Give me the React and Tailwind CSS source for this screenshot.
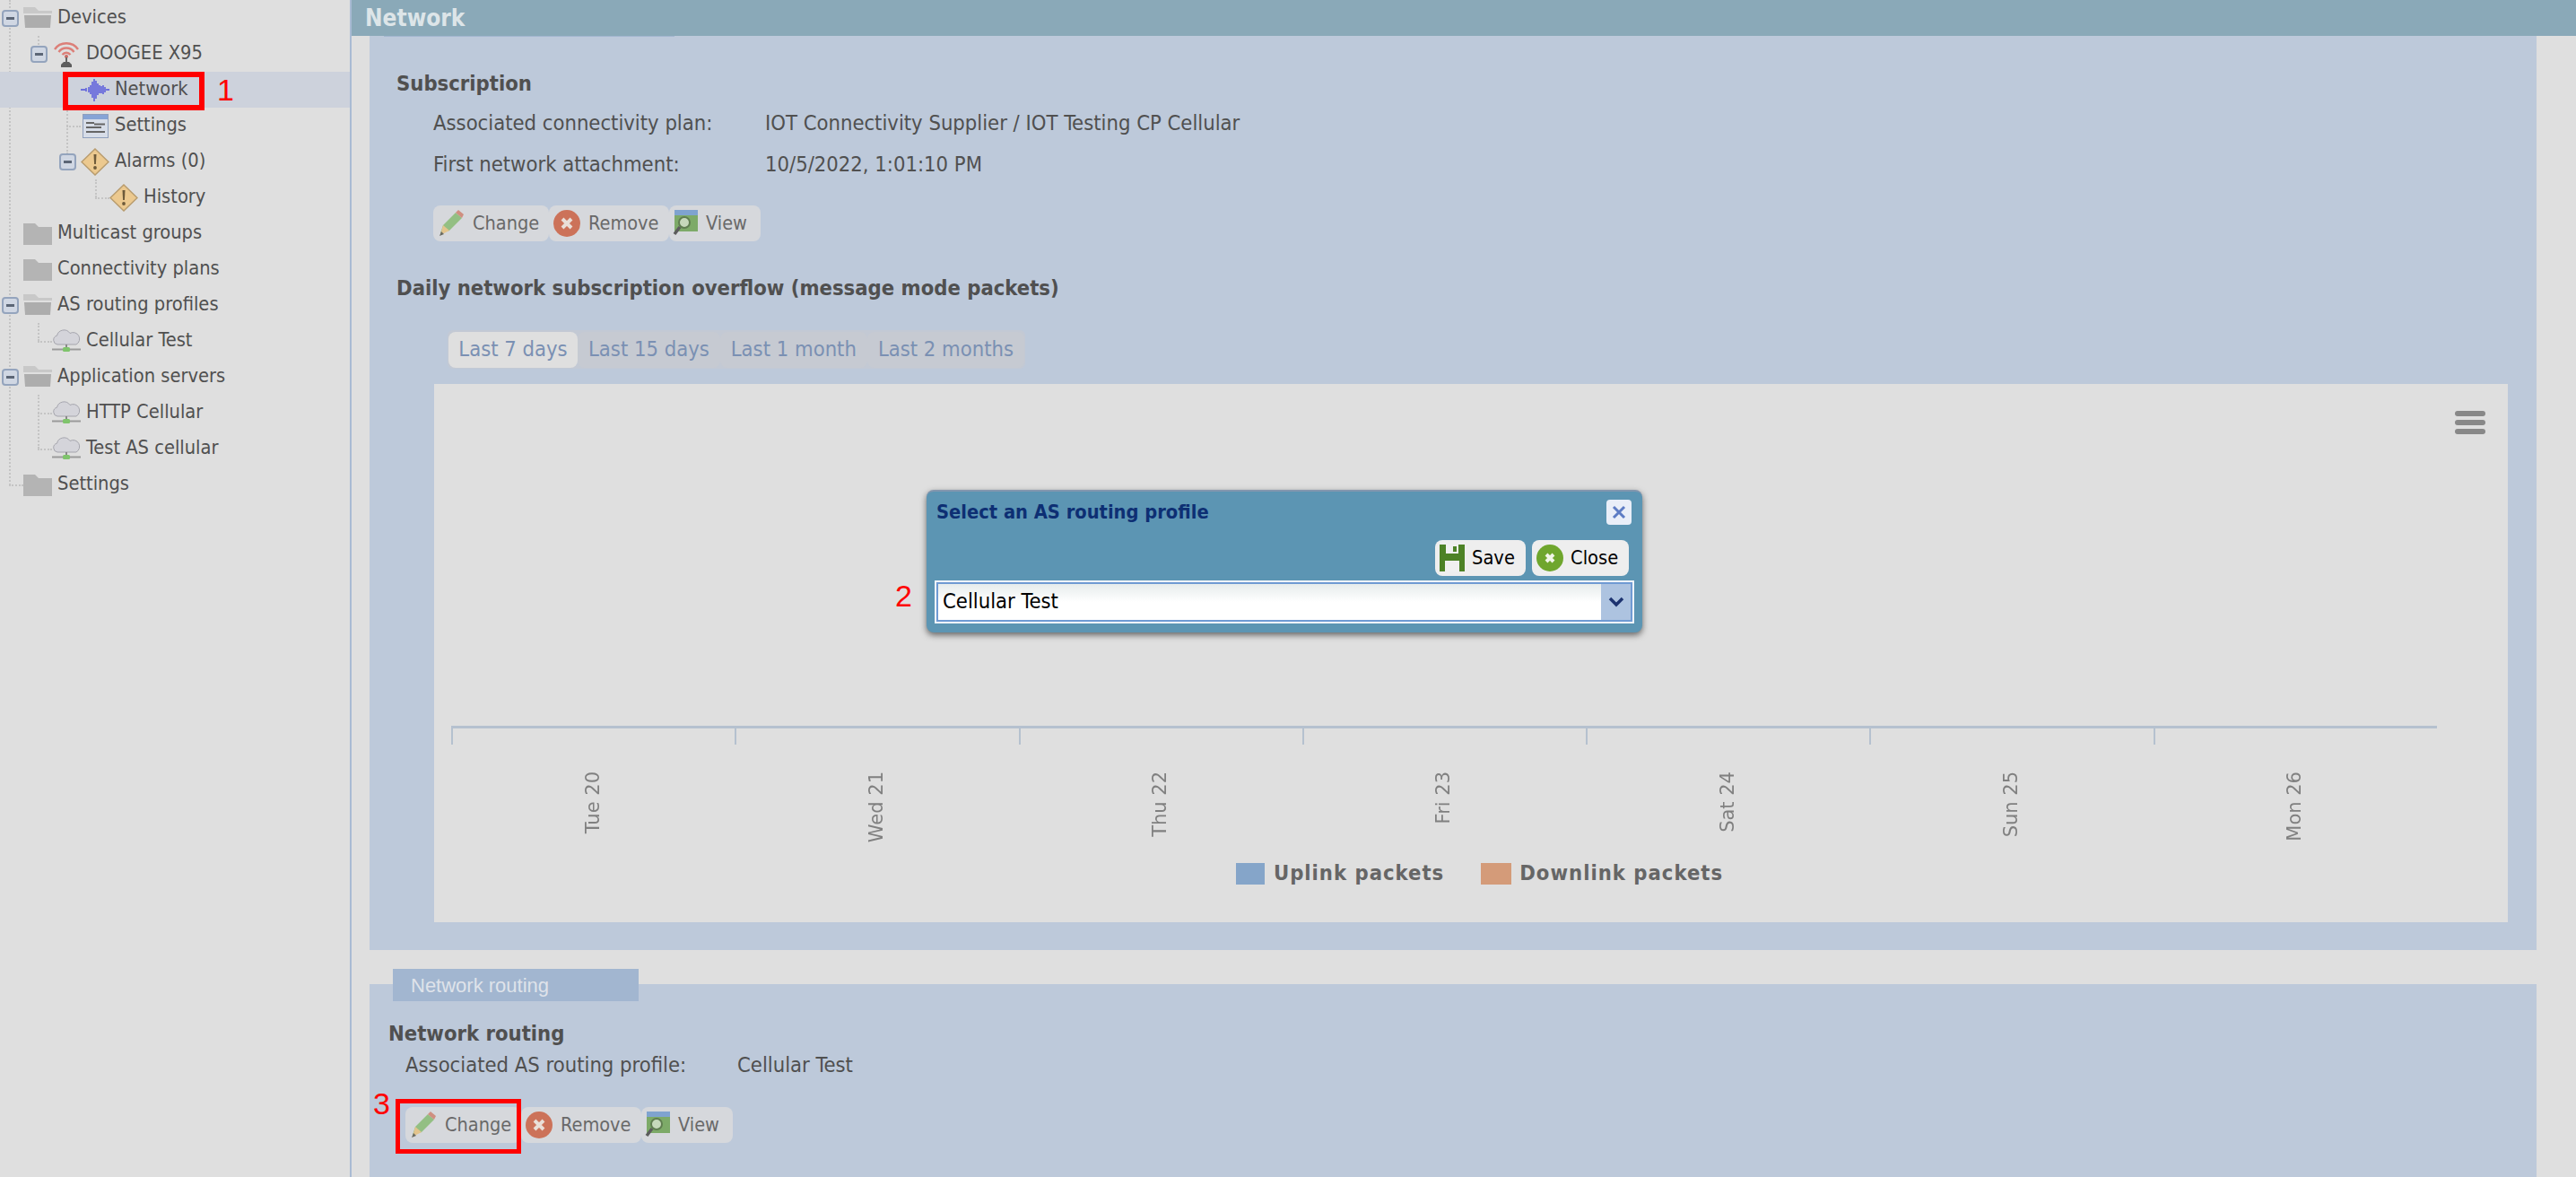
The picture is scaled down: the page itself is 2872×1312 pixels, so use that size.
import React from 'react';

const Minus = () => (
  <svg width="19" height="19" viewBox="0 0 19 19" className="shrink-0 blur-[0.4px]">
    <rect x="1" y="1" width="17" height="17" rx="3" fill="#d0d7e3" stroke="#94a4bd" strokeWidth="2" />
    <rect x="5" y="8" width="9" height="3" fill="#5c6676" />
  </svg>
);

const FolderClosed = () => (
  <svg width="32" height="26" viewBox="0 0 32 26" className="shrink-0">
    <path d="M0 2h13l4 4h15v20H0z" fill="#b4b4b4" />
  </svg>
);

const FolderOpen = () => (
  <svg width="32" height="26" viewBox="0 0 32 26" className="shrink-0">
    <path d="M0 1h13l4 4h15v3H0z" fill="#c8c8c8" />
    <path d="M1 10h30l-1 14H2z" fill="#adadad" />
  </svg>
);

const Wifi = () => (
  <svg width="30" height="32" viewBox="0 0 30 32" className="shrink-0 blur-[0.4px]">
    <g fill="none" stroke="#dc7f78" strokeWidth="2.4">
      <path d="M2 11C8 2 22 2 28 11" />
      <path d="M6.5 14C10.5 8 19.500 8 23.500 14" />
      <path d="M10.5 17C13 14 17 14 19.500 17" />
    </g>
    <circle cx="15" cy="19" r="2" fill="#c96a63" />
    <path d="M14 20h2v5h-2z" fill="#666" />
    <path d="M9 31v-3l3-3h6l3 3v3z" fill="#5e5e5e" />
  </svg>
);

const Wave = () => (
  <svg width="32" height="28" viewBox="0 0 32 28" className="shrink-0 blur-[0.4px]">
    <path
      d="M0 14h6M6 12v4M9 11v6M11 9v10M13 5v18M15 2v25M17 4v20M19 7v13M21 9v9M23 10v8M25 9v10M27 11v6M29 13v2M29 14h3"
      fill="none"
      stroke="#6d6fdc"
      strokeWidth="1.8"
    />
  </svg>
);

const SettingsForm = () => (
  <svg width="29" height="27" viewBox="0 0 29 27" className="shrink-0 blur-[0.4px]">
    <rect x="0.500" y="0.500" width="28" height="26" fill="#d7dde8" stroke="#8f9fbc" />
    <rect x="1" y="1" width="27" height="5" fill="#86a4d6" />
    <path d="M4 10h9M4 15h17M4 20h9M13 11.500h12M8 20h17" stroke="#666" strokeWidth="1.800" />
  </svg>
);

const Diamond = () => (
  <svg width="32" height="31" viewBox="0 0 32 31" className="shrink-0 blur-[0.4px]">
    <path d="M16 1l15 14.500L16 30 1 15.500z" fill="#ecc98f" stroke="#b89c6e" strokeWidth="1.500" />
    <path d="M14.500 7h3l-.6 11h-1.800z" fill="#6d5a3a" />
    <circle cx="16" cy="22" r="1.900" fill="#6d5a3a" />
  </svg>
);

const Cloud = () => (
  <svg width="32" height="26" viewBox="0 0 32 26" className="shrink-0 blur-[0.4px]">
    <path d="M6 17a5 5 0 0 1-.5-9.800A8 8 0 0 1 20 4.500 6.500 6.500 0 0 1 27 17z" fill="#d4d4da" stroke="#a5a5ad" />
    <path d="M15 17h2v4h-2z" fill="#888" />
    <path d="M0 22.500h32" stroke="#9a9a9a" strokeWidth="2" />
    <rect x="12" y="20" width="8" height="5" rx="1.500" fill="#7fc46c" />
  </svg>
);

const Pencil = () => (
  <svg width="32" height="32" viewBox="0 0 32 32" className="shrink-0 blur-[0.4px]">
    <path d="M4 27l3-9L21 4l7 6-14 14z" fill="#93bf83" />
    <path d="M21 4l3-3 6 5-2 4z" fill="#cf8f80" />
    <path d="M4 29l3-11 7 6z" fill="#e3c48d" />
    <path d="M3 30l2-5 3 3z" fill="#6b6b62" />
  </svg>
);

const RemoveIcon = () => (
  <svg width="32" height="32" viewBox="0 0 32 32" className="shrink-0 blur-[0.4px]">
    <circle cx="16" cy="16" r="15" fill="#cc7259" />
    <path d="M11 11l10 10M21 11L11 21" stroke="#e9dfd8" strokeWidth="4" />
  </svg>
);

const ViewIcon = () => (
  <svg width="29" height="32" viewBox="0 0 29 32" className="shrink-0 blur-[0.4px]">
    <rect x="2" y="1" width="26" height="24" fill="#7daa68" />
    <rect x="2" y="1" width="26" height="6" fill="#7fa3cf" />
    <circle cx="13" cy="15" r="6" fill="#c6d8bb" stroke="#5f7d50" strokeWidth="2" />
    <path d="M8 20l-6 8" stroke="#5c5c5c" strokeWidth="3.500" />
  </svg>
);

const Floppy = () => (
  <svg width="30" height="32" viewBox="0 0 30 32" className="shrink-0 blur-[0.4px]">
    <path d="M1 1h28v30H1z" fill="#4d8226" />
    <rect x="8" y="1" width="14" height="10" fill="#f0f0f0" />
    <rect x="16" y="3" width="4" height="6" fill="#4d8226" />
    <rect x="7" y="19" width="16" height="12" fill="#f0f0f0" />
  </svg>
);

const CloseIcon = () => (
  <svg width="32" height="32" viewBox="0 0 32 32" className="shrink-0 blur-[0.4px]">
    <circle cx="16" cy="16" r="15" fill="#6fa62d" />
    <path d="M12 12l8 8M20 12l-8 8" stroke="#f1f5e8" strokeWidth="4" />
  </svg>
);

const tree = [
  { label: 'Devices', left: 2, Icon: FolderOpen, minus: true },
  { label: 'DOOGEE X95', left: 34, Icon: Wifi, minus: true },
  { label: 'Network', left: 66, Icon: Wave, selected: true },
  { label: 'Settings', left: 66, Icon: SettingsForm },
  { label: 'Alarms (0)', left: 66, Icon: Diamond, minus: true },
  { label: 'History', left: 98, Icon: Diamond },
  { label: 'Multicast groups', left: 2, Icon: FolderClosed },
  { label: 'Connectivity plans', left: 2, Icon: FolderClosed },
  { label: 'AS routing profiles', left: 2, Icon: FolderOpen, minus: true },
  { label: 'Cellular Test', left: 34, Icon: Cloud },
  { label: 'Application servers', left: 2, Icon: FolderOpen, minus: true },
  { label: 'HTTP Cellular', left: 34, Icon: Cloud },
  { label: 'Test AS cellular', left: 34, Icon: Cloud },
  { label: 'Settings', left: 2, Icon: FolderClosed },
];

function TreeRow({ item }) {
  const { label, left, Icon, minus, selected } = item;
  return (
    <div className={`relative flex h-10 items-center ${selected ? 'bg-[#cdd2dc]' : ''}`} style={{ paddingLeft: left }}>
      <span className="flex w-[24px] justify-start">{minus && <Minus />}</span>
      <span className="flex w-[32px] justify-center"><Icon /></span>
      <span className="ml-[6px] whitespace-nowrap pb-[2px]">{label}</span>
      {selected && (
        <>
          <div className="absolute left-[70px] top-0 h-[43px] w-[158px] border-[6px] border-[#ff0000]" />
          <span className="absolute left-[242px] top-0 font-['Liberation_Sans',sans-serif] text-[34px] leading-[40px] text-[#ff0000]">1</span>
        </>
      )}
    </div>
  );
}

function ActionButtons() {
  return (
    <div className="flex h-10 w-fit text-[21.500px] text-[#696969]">
      <button className="flex w-[129px] items-center gap-2 rounded-lg bg-[#d6d8dc] pl-1"><Pencil />Change</button>
      <button className="flex w-[134px] items-center gap-2 rounded-lg bg-[#d6d8dc] pl-1"><RemoveIcon />Remove</button>
      <button className="flex w-[102px] items-center gap-2 rounded-lg bg-[#d6d8dc] pl-1"><ViewIcon />View</button>
    </div>
  );
}

const days = ['Tue 20', 'Wed 21', 'Thu 22', 'Fri 23', 'Sat 24', 'Sun 25', 'Mon 26'];
const ranges = ['Last 15 days', 'Last 1 month', 'Last 2 months'];

export default function App() {
  return (
    <div className="relative flex h-[1312px] w-[2872px] overflow-hidden bg-[#dfdfdf] font-['DejaVu_Sans_Condensed','Noto_Sans',sans-serif] text-[23.600px] text-[#505050]">
      {/* Tree */}
      <aside className="relative w-[392px] shrink-0 border-r-2 border-[#a9bbd3] text-[21.700px]">
        {/* dotted connector lines */}
        <div className="absolute left-[10px] top-0 h-[541px] border-l-2 border-dotted border-[#c4c4c4]" />
        <div className="absolute left-[10px] top-[540px] w-[16px] border-t-2 border-dotted border-[#c4c4c4]" />
        <div className="absolute left-[42px] top-[40px] h-[14px] border-l-2 border-dotted border-[#c4c4c4]" />
        <div className="absolute left-[74px] top-[120px] h-[52px] border-l-2 border-dotted border-[#c4c4c4]" />
        <div className="absolute left-[74px] top-[140px] w-[16px] border-t-2 border-dotted border-[#c4c4c4]" />
        <div className="absolute left-[106px] top-[200px] h-[20px] border-l-2 border-dotted border-[#c4c4c4]" />
        <div className="absolute left-[106px] top-[220px] w-[16px] border-t-2 border-dotted border-[#c4c4c4]" />
        <div className="absolute left-[42px] top-[360px] h-[20px] border-l-2 border-dotted border-[#c4c4c4]" />
        <div className="absolute left-[42px] top-[380px] w-[16px] border-t-2 border-dotted border-[#c4c4c4]" />
        <div className="absolute left-[42px] top-[440px] h-[60px] border-l-2 border-dotted border-[#c4c4c4]" />
        <div className="absolute left-[42px] top-[460px] w-[16px] border-t-2 border-dotted border-[#c4c4c4]" />
        <div className="absolute left-[42px] top-[500px] w-[16px] border-t-2 border-dotted border-[#c4c4c4]" />
        <div className="relative">
          {tree.map((item, i) => (
            <TreeRow key={i} item={item} />
          ))}
        </div>
      </aside>

      {/* Main */}
      <main className="min-w-0 flex-1">
        <div className="h-10 bg-[#8aa9b8] pl-[15px] text-[26px] font-bold leading-[40px] text-[#dde5e8]">Network</div>

        <div className="ml-5 mr-[44px]">
          <section className="relative h-[1019px] bg-[#bdc9da] pl-[30px] pt-[38px]">
            <div className="absolute left-[16px] top-0 h-[1px] w-[324px] bg-[#a2b6d0]" />
            <h2 className="h-[30px] font-bold leading-[30px]">Subscription</h2>
            <div className="ml-[41px] mt-2">
              <div className="flex h-[45px] items-center pb-[2px]">
                <span className="w-[370px]">Associated connectivity plan:</span>
                <span>IOT Connectivity Supplier / IOT Testing CP Cellular</span>
              </div>
              <div className="flex h-[45px] items-center">
                <span className="w-[370px]">First network attachment:</span>
                <span>10/5/2022, 1:01:10 PM</span>
              </div>
              <div className="mt-[23px]"><ActionButtons /></div>
            </div>

            <h2 className="mt-[37px] h-[30px] font-bold leading-[30px]">Daily network subscription overflow (message mode packets)</h2>

            <div className="ml-[57px] mt-8 flex h-[43px] w-fit items-center rounded-md bg-[#c3c9d4] px-px text-[#7a90b3]">
              <button className="h-10 w-[144px] rounded-lg bg-[#dfdfdf]">Last 7 days</button>
              {ranges.map((r) => (
                <button key={r} className="h-10 rounded-lg bg-[#c6cad2] px-[12px]">{r}</button>
              ))}
            </div>

            <div className="relative ml-[42px] mt-[17px] h-[600px] w-[2312px] bg-[#dfdfdf] pl-[19px] pt-[381px]">
              <div className="absolute left-[2253px] top-[30px] flex w-[34px] flex-col gap-1">
                <div className="h-[6px] rounded-full bg-[#888888]" />
                <div className="h-[6px] rounded-full bg-[#888888]" />
                <div className="h-[6px] rounded-full bg-[#888888]" />
              </div>

              <div className="grid h-[153px] w-[2214px] grid-cols-7">
                {days.map((d) => (
                  <div key={d}>
                    <div className="h-[21px] border-l-2 border-t-[3px] border-[#b5c1cf]" />
                    <div className="mt-[30px] flex justify-center">
                      <span className="rotate-180 font-['DejaVu_Sans',sans-serif] text-[21px] leading-none text-[#808080] [writing-mode:vertical-rl]">{d}</span>
                    </div>
                  </div>
                ))}
              </div>

              <div className="flex h-6 items-center justify-center font-bold tracking-[1px] text-[#666666]">
                <span className="h-6 w-[32px] bg-[#85a5c9]" />
                <span className="ml-[10px]">Uplink packets</span>
                <span className="ml-[41px] h-6 w-[34px] bg-[#d49b79]" />
                <span className="ml-[9px]">Downlink packets</span>
              </div>
            </div>
          </section>

          <section className="relative mt-[38px] h-[300px] bg-[#bdc9da] pl-[21px] pt-[40px]">
            <div className="absolute left-[26px] top-[-17px] flex h-[36px] w-[274px] items-center bg-[#a2b6d0] pl-[20px] font-['Liberation_Sans',sans-serif] text-[22px] text-[#dfe3ea]">Network routing</div>
            <h2 className="h-[30px] font-bold leading-[30px]">Network routing</h2>
            <div className="ml-[19px] mt-[1px]">
              <div className="flex h-[40px] items-center">
                <span className="w-[370px]">Associated AS routing profile:</span>
                <span>Cellular Test</span>
              </div>
              <div className="relative mt-[26px] w-fit">
                <ActionButtons />
                <div className="absolute left-[-11px] top-[-9px] h-[61px] w-[140px] border-[5px] border-[#ff0000]" />
                <span className="absolute left-[-36px] top-[-24px] font-['Liberation_Sans',sans-serif] text-[34px] leading-[40px] text-[#ff0000]">3</span>
              </div>
            </div>
          </section>
        </div>
      </main>

      {/* AS routing profile dialog */}
      <div className="absolute left-[1033px] top-[546px] flex h-[159px] w-[798px] flex-col rounded-lg border-t-2 border-[#8296ae] bg-[#5c95b3] px-[9px] text-[21.700px] shadow-[0_3px_7px_rgba(0,0,0,0.55)]">
        <div className="flex h-[54px] items-center justify-between pb-[8px] pl-[2px] pr-[3px]">
          <span className="font-bold text-[#0d2f73]">Select an AS routing profile</span>
          <button className="flex h-7 w-7 items-center justify-center rounded bg-[#e9eef8]">
            <svg width="18" height="18" viewBox="0 0 18 18"><path d="M3 3l12 12M15 3L3 15" stroke="#5d7cc4" strokeWidth="3" /></svg>
          </button>
        </div>
        <div className="flex justify-end gap-[7px] pr-[6px] text-black">
          <button className="flex h-10 w-[101px] items-center gap-[7px] rounded-lg bg-[#eeeeee] pl-1"><Floppy />Save</button>
          <button className="flex h-10 w-[108px] items-center gap-[7px] rounded-lg bg-[#eeeeee] pl-1"><CloseIcon />Close</button>
        </div>
        <div className="mt-[5px] flex h-[48px] border-2 border-[#eef3fa] bg-[#6f9ad3] p-[2px]">
          <div className="flex flex-1 items-center bg-linear-to-b from-[#e6ecec] via-white to-white pl-[5px] text-[23.600px] text-black">Cellular Test</div>
          <div className="flex w-[33px] items-center justify-center bg-[#adc3e0]">
            <svg width="18" height="12" viewBox="0 0 18 12"><path d="M2 2l7 7 7-7" fill="none" stroke="#1d3370" strokeWidth="3.500" /></svg>
          </div>
        </div>
        <span className="absolute left-[-35px] top-[96px] font-['Liberation_Sans',sans-serif] text-[34px] leading-[40px] text-[#ff0000]">2</span>
      </div>
    </div>
  );
}
